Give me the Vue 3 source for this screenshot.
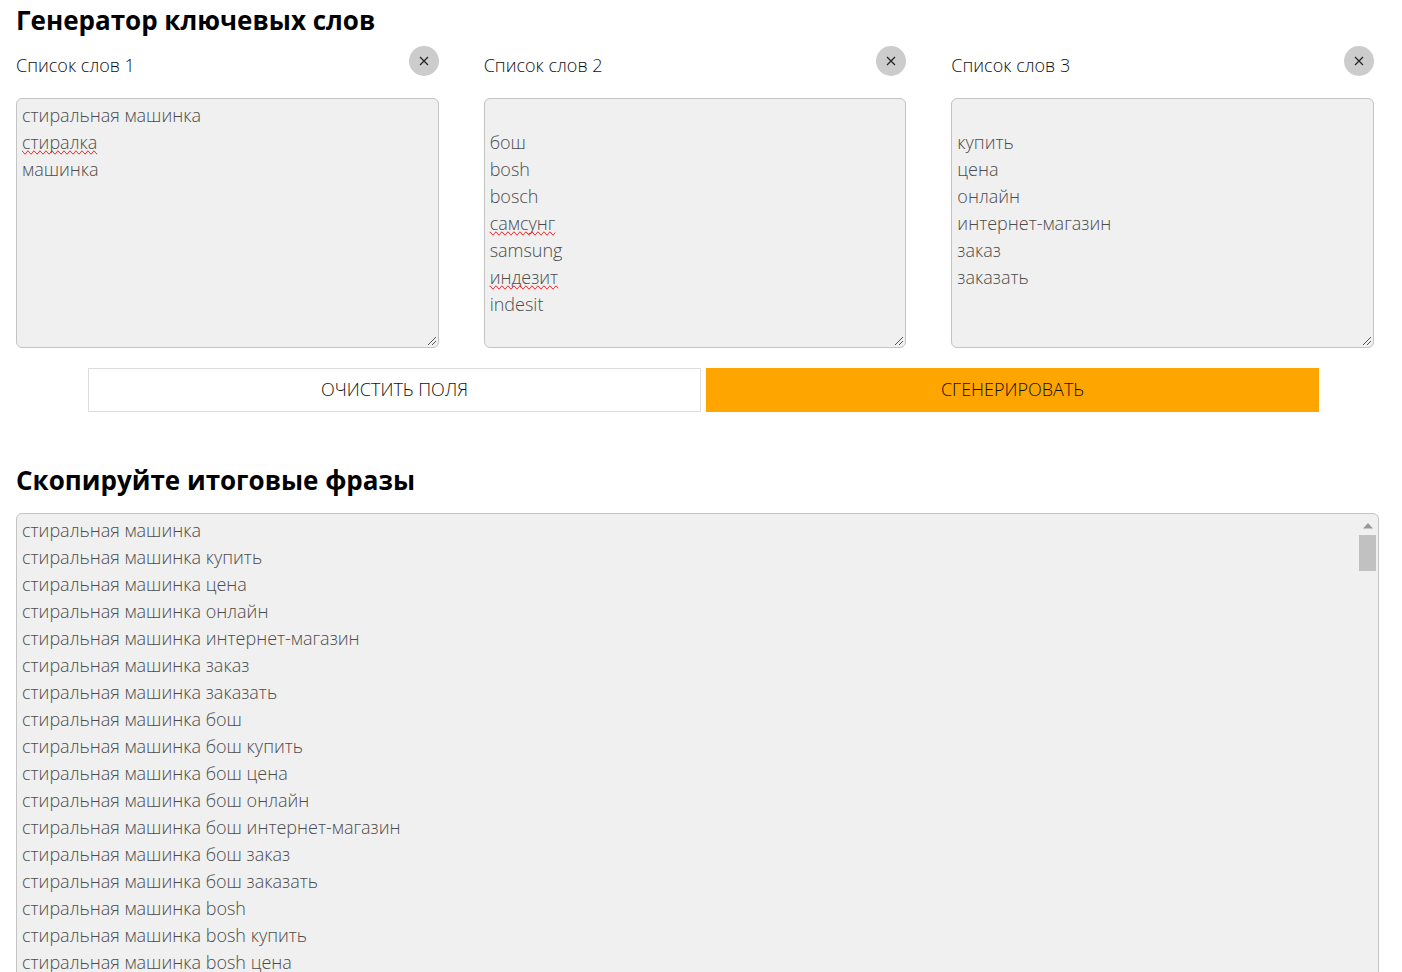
<script setup>
import { ref } from 'vue'

const lists = ref([
  { id: 1, text: 'стиральная машинка\nстиралка\nмашинка', marks: ['стиралка'] },
  { id: 2, text: '\nбош\nbosh\nbosch\nсамсунг\nsamsung\nиндезит\nindesit', marks: ['самсунг', 'индезит'] },
  { id: 3, text: '\nкупить\nцена\nонлайн\nинтернет-магазин\nзаказ\nзаказать', marks: [] },
])
const result = ref('')

const linesOf = (text) => text.split('\n')

function generate() {
  result.value = lists.value
    .map((list) => linesOf(list.text))
    .reduce((acc, words) => acc.flatMap((a) => words.map((w) => [a, w].filter(Boolean).join(' '))), [''])
    .join('\n')
}

function clearAll() {
  lists.value.forEach((list) => (list.text = ''))
}

function removeList(id) {
  lists.value = lists.value.filter((list) => list.id !== id)
}

generate()
</script>

<template>
  <main class="page">
    <h1>Генератор ключевых слов</h1>
    <section class="lists">
      <div v-for="list in lists" :key="list.id" class="list">
        <div class="head">
          <label :for="'list-' + list.id">Список слов {{ list.id }}</label>
          <button class="remove" type="button" :aria-label="'Удалить список ' + list.id" @click="removeList(list.id)">
            <svg viewBox="0 0 10 10" width="10" height="10"><path d="M1 1 9 9M9 1 1 9" /></svg>
          </button>
        </div>
        <div class="field">
          <textarea :id="'list-' + list.id" v-model="list.text" spellcheck="false"></textarea>
          <div class="marks" aria-hidden="true">
            <div v-for="(line, i) in linesOf(list.text)" :key="i" class="mark-line">
              <span v-if="list.marks.includes(line)" class="typo">{{ line }}</span>
            </div>
          </div>
          <svg class="grip" viewBox="0 0 10 10" width="10" height="10"><path d="M1 9 9 1M5 9 9 5" /></svg>
        </div>
      </div>
    </section>
    <div class="actions">
      <button class="clear" type="button" @click="clearAll">ОЧИСТИТЬ ПОЛЯ</button>
      <button class="generate" type="button" @click="generate">СГЕНЕРИРОВАТЬ</button>
    </div>
    <h2 id="result-title">Скопируйте итоговые фразы</h2>
    <div class="output">
      <textarea v-model="result" aria-labelledby="result-title" spellcheck="false"></textarea>
      <div class="scroll" aria-hidden="true">
        <svg viewBox="0 0 10 6" width="10" height="6"><path d="M5 0 10 5.5H0Z" /></svg>
        <span class="thumb"></span>
      </div>
    </div>
  </main>
</template>

<style>
html {
  height: 100%;
  overflow: hidden;
}
body {
  margin: 0;
}
</style>

<style scoped>
.page {
  height: 100vh;
  overflow: hidden;
  box-sizing: border-box;
  padding: 0 23px 0 16px;
  background: #fff;
  color: #111;
  font-family: "Open Sans", "Noto Sans", sans-serif;
  font-size: 18px;
  font-weight: 300;
}
h1,
h2 {
  margin: 0;
  color: #000;
  font-size: 26px;
  line-height: 40px;
  font-weight: 700;
}
.lists {
  display: grid;
  grid-template-columns: repeat(3, 1fr);
  gap: 45px;
  margin: 6px 5px 0 0;
}
.head {
  display: flex;
  justify-content: space-between;
  height: 52px;
}
.head label {
  line-height: 38px;
}
.remove {
  display: grid;
  place-items: center;
  width: 30px;
  height: 30px;
  padding: 0;
  border: 0;
  border-radius: 50%;
  background: #ccc;
  cursor: pointer;
}
.remove path {
  stroke: #222;
  stroke-width: 1.2;
}
.field,
.output {
  position: relative;
}
textarea {
  display: block;
  box-sizing: border-box;
  width: 100%;
  height: 250px;
  padding: 3px 5px;
  border: 1px solid #c4c4c4;
  border-radius: 6px;
  outline: 0;
  background: #f0f0f0;
  color: #4c4c4c;
  font: inherit;
  line-height: 27px;
  resize: none;
  overflow: hidden;
}
.marks {
  position: absolute;
  inset: 4px 6px;
  color: transparent;
  pointer-events: none;
}
.mark-line {
  height: 27px;
  line-height: 27px;
}
.typo {
  text-decoration-line: spelling-error;
}
.grip {
  position: absolute;
  right: 2px;
  bottom: 2px;
}
.grip path {
  fill: none;
  stroke: #555;
}
.actions {
  display: grid;
  grid-template-columns: 1fr 1fr;
  gap: 5px;
  margin: 20px 60px 0 72px;
}
.actions button {
  height: 44px;
  padding: 0 0 2px;
  border: 1px solid #ddd;
  background: #fff;
  color: #111;
  font: inherit;
  cursor: pointer;
}
.actions .generate {
  border-color: #ffa500;
  background: #ffa500;
}
h2 {
  margin-top: 48px;
}
.output {
  margin-top: 13px;
}
.output textarea {
  height: 500px;
  padding-right: 24px;
}
.scroll {
  position: absolute;
  top: 10px;
  right: 3px;
  display: flex;
  flex-direction: column;
  align-items: center;
  gap: 6px;
  width: 17px;
}
.scroll path {
  fill: #999;
}
.thumb {
  width: 17px;
  height: 36px;
  background: #c1c1c1;
}
</style>
